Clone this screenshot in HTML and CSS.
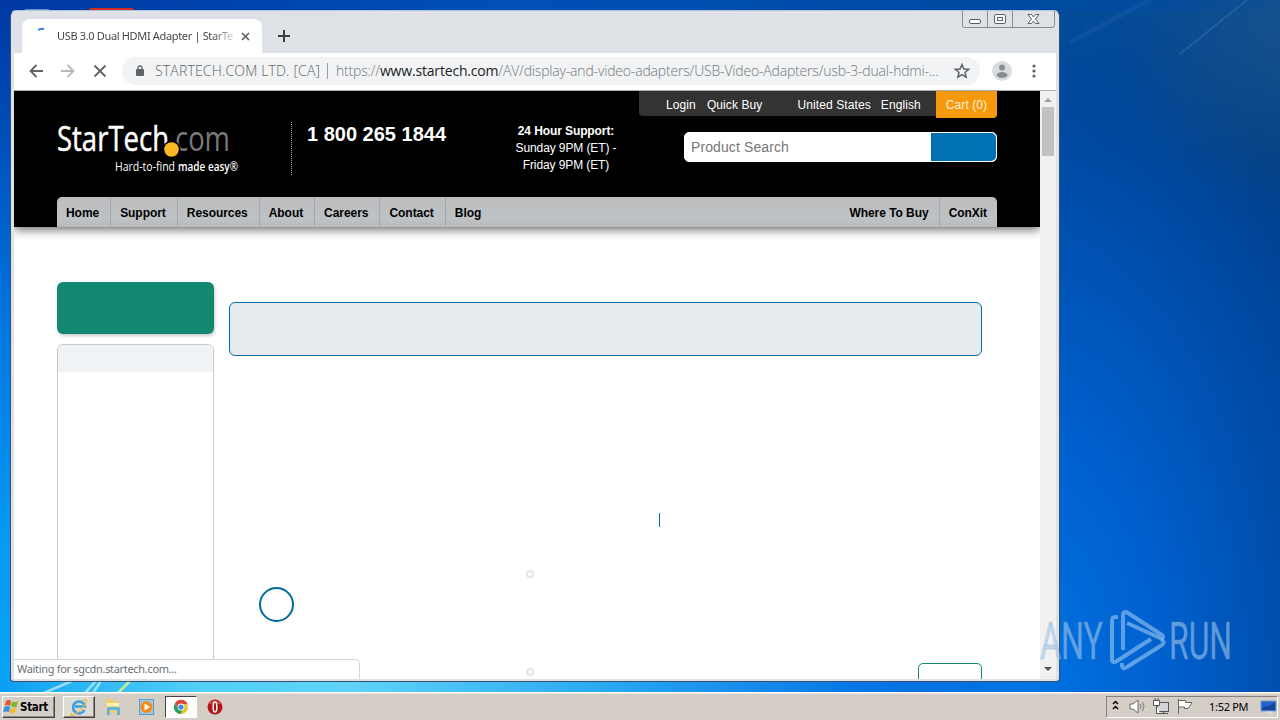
FILE: index.html
```html
<!DOCTYPE html>
<html lang="en">
<head>
    <meta charset="UTF-8">
    <title>USB 3.0 Dual HDMI Adapter | StarTech.com</title>
    <link rel="stylesheet" href="styles.css">
</head>
<body>
<div class="desktop">
    <!-- wallpaper light streaks and icons behind the window -->
    <svg class="streaks" width="1280" height="692">
        <path d="M1180 54L1247 0" stroke="#4f86c0" stroke-width="1.5" opacity=".4"/>
        <path d="M1070 42L1150 0" stroke="#3e7cc4" stroke-width="5" opacity=".15"/>
        <path d="M44 693L72 681M85 693L96 681M93 693L101 681" stroke="#d8f6ff" stroke-width="2.5" opacity=".65"/>
        <path d="M118 693L130 681" stroke="#c9ef90" stroke-width="2.5"/>
        <rect x="89" y="8" width="45" height="6" rx="2" fill="#d22b20"/>
        <rect x="25" y="9" width="24" height="3" fill="#6c91c9"/>
    </svg>

    <div class="window">
        <div class="titlebar">
            <div class="tab">
                <svg class="spinner" width="14" height="14"><path d="M3 3Q6 1 9 2" stroke="#3b78e7" stroke-width="2" fill="none"/></svg>
                <span class="tab-title">USB 3.0 Dual HDMI Adapter | StarTe</span>
                <svg class="tab-close" width="9" height="9"><path d="M1 1L8 8M8 1L1 8" stroke="#5f6368" stroke-width="1.7"/></svg>
            </div>
            <svg class="new-tab" width="12" height="12"><path d="M6 0V12M0 6H12" stroke="#3c4043" stroke-width="2"/></svg>
            <div class="controls">
                <svg width="94" height="17" fill="none" stroke="#5b5e68">
                    <path d="M.5 0V14.5Q.5 16.5 2.5 16.5H90Q92.500 16.500 92.500 14V0M25.500 0V16M50.500 0V16" stroke="#888b94"/>
                    <rect x="7.500" y="8.500" width="11" height="4" rx="1.500" fill="#fff"/>
                    <rect x="32.500" y="3.500" width="11" height="9" rx="1.500" fill="#fff"/>
                    <rect x="35.500" y="6.500" width="5" height="3"/>
                    <path d="M66 3.500H69.500L71.500 6L73.500 3.500H77L73.500 8L77 12.500H73.500L71.500 10L69.500 12.500H66L69.500 8Z" fill="#fff"/>
                </svg>
            </div>
        </div>

        <div class="toolbar">
            <svg width="14" height="14" class="back"><path d="M14 7H1.500M7.500 1L1.500 7L7.500 13" class="ico"/></svg>
            <svg width="14" height="14" class="forward"><path d="M0 7H12.500M6.500 1L12.500 7L6.500 13" class="ico"/></svg>
            <svg width="14" height="14" class="stop"><path d="M1.500 1.500L12.500 12.500M12.500 1.500L1.500 12.500" class="ico"/></svg>
            <div class="omnibox">
                <svg width="10" height="12" class="lock"><rect x="1" y="4" width="8" height="7" rx="1" fill="#5f6368"/><path d="M3 5V3Q3 1 5 1T7 3V5" stroke="#5f6368" stroke-width="1.300" fill="none"/></svg>
                <span class="issuer">STARTECH.COM LTD. [CA]</span>
                <span class="url">https://<b>www.startech.com</b>/AV/display-and-video-adapters/USB-Video-Adapters/usb-3-dual-hdmi-...</span>
                <svg width="16" height="16" class="star"><path d="M8 1.500L9.900 6L14.700 6.400L11 9.500L12.200 14.200L8 11.700L3.800 14.200L5 9.500L1.300 6.400L6.100 6Z" fill="none" stroke="#5f6368" stroke-width="1.500"/></svg>
            </div>
            <svg width="20" height="20" class="avatar"><circle cx="10" cy="10" r="10" fill="#dadce0"/><circle cx="10" cy="6.500" r="3" fill="#8a8d91"/><ellipse cx="10" cy="14" rx="5.500" ry="3" fill="#8a8d91"/></svg>
            <svg width="4" height="14" class="menu" fill="#5f6368"><circle cx="2" cy="2" r="1.600"/><circle cx="2" cy="7" r="1.600"/><circle cx="2" cy="12" r="1.600"/></svg>
        </div>

        <div class="viewport">
            <div class="page">
                <header>
                    <div class="topbar">
                        <div class="links">
                            <span>Login</span><span>Quick Buy</span>
                            <span class="country">United States</span><span>English</span>
                        </div>
                        <div class="cart">Cart (0)</div>
                    </div>
                    <div class="masthead">
                        <svg class="logo" width="184" height="54">
                            <text x="0" y="28" font-size="35" fill="#fff" stroke="#fff" stroke-width=".5" textLength="112" lengthAdjust="spacingAndGlyphs">StarTech</text>
                            <text x="118" y="28" font-size="35" fill="#77787b" textLength="55" lengthAdjust="spacingAndGlyphs">com</text>
                            <circle cx="114.500" cy="26.500" r="9" fill="#000"/>
                            <circle cx="114.500" cy="26.500" r="7.300" fill="#fdb924"/>
                            <text x="58" y="48" font-size="12" fill="#fff" textLength="60" lengthAdjust="spacingAndGlyphs" class="tagline">Hard-to-find</text>
                            <text x="121" y="48" font-size="12" fill="#fff" textLength="60" lengthAdjust="spacingAndGlyphs" class="tagline strong">made easy®</text>
                        </svg>
                        <div class="phone">1 800 265 1844</div>
                        <div class="hours"><b>24 Hour Support:</b><br>Sunday 9PM (ET) -<br>Friday 9PM (ET)</div>
                        <div class="search"><span>Product Search</span><i></i></div>
                    </div>
                    <nav>
                        <a>Home</a><a>Support</a><a>Resources</a><a>About</a><a>Careers</a><a>Contact</a><a class="last">Blog</a>
                        <a class="buy">Where To Buy</a><a class="last">ConXit</a>
                    </nav>
                </header>
                <main>
                    <aside>
                        <div class="promo"></div>
                        <div class="panel"><div class="panel-head"></div></div>
                    </aside>
                    <section>
                        <div class="notice"></div>
                        <div class="divider"></div>
                        <div class="product">
                            <div class="round"></div>
                            <div class="dots"><i></i><i></i></div>
                            <div class="green-box"></div>
                        </div>
                    </section>
                </main>
            </div>
            <div class="scrollbar">
                <svg width="16" height="16"><path d="M4 11L8 7L12 11Z" fill="#a0a0a0"/></svg>
                <div class="thumb"></div>
                <svg width="16" height="17"><path d="M4 5H12L8 9Z" fill="#505050"/></svg>
            </div>
            <div class="status">Waiting for sgcdn.startech.com...</div>
        </div>
    </div>

    <svg class="watermark" width="194" height="64" fill="none">
        <g class="mark-text">
            <text x="1" y="50" textLength="63" lengthAdjust="spacingAndGlyphs">ANY</text>
            <text x="130" y="50" textLength="63" lengthAdjust="spacingAndGlyphs">RUN</text>
        </g>
        <g stroke="#9cc8f2" stroke-width="4" stroke-opacity=".6" stroke-linejoin="round">
            <path d="M79 8H76Q73 8 73 12V50Q73 55 78 52L112 30"/>
            <path d="M84 41V7Q84 1 89 4L123 26Q126 29 121 29L88 14"/>
            <path d="M83 54V57Q84 61 88 58L123 36Q127 33 122 30"/>
        </g>
    </svg>
</div>

<div class="taskbar">
    <div class="start">
        <svg width="17" height="16"><path d="M3 2Q6 0 8 2L7 7Q4 5 2 7Z" fill="#e5532d"/><path d="M9 2.500Q12 4 15 2L13.500 8Q11 9 8 7Z" fill="#78b928"/><path d="M1.500 8Q4 6 7 8L6 13Q3 12 0 13Z" fill="#3b8fe0"/><path d="M8 8.500Q10 10 13 9L12 14Q9 15 6.500 13Z" fill="#f4bd28"/></svg>
        <span>Start</span>
    </div>
    <div class="task raised">
        <svg width="18" height="18" fill="none"><path d="M14.500 12A6 6 0 1 1 15 8.500H5" stroke="#3c9ee0" stroke-width="2.500"/><path d="M2 15Q-1 18 3 17Q11 14 16 5Q18 0 12 3" stroke="#e5bf44" stroke-width="1.300"/></svg>
    </div>
    <div class="task">
        <svg width="18" height="18"><path d="M2 3L3 1H8L9 3H15V15H2Z" fill="#efd173"/><path d="M3 5H15V8H3Z" fill="#fff2bb"/><path d="M3 17V10Q3 9 5 9H14Q16 9 16 11V17H13V12H6V17Z" fill="#63b3df"/></svg>
    </div>
    <div class="task">
        <svg width="18" height="18"><rect x="1.500" y="1.500" width="14" height="15" fill="#9ec9ef" stroke="#5b9bd0"/><circle cx="8.500" cy="9" r="6" fill="#f58c14"/><path d="M6.500 5.500L12 9L6.500 12.500Z" fill="#fff"/></svg>
    </div>
    <div class="task active">
        <svg width="16" height="16"><circle cx="8" cy="8" r="7" fill="#e4c62f"/><path d="M2 4.300A7 7 0 0 1 14.500 5H8L5 9Z" fill="#dc4437"/><path d="M1.900 4.500A7 7 0 0 0 7.500 15L10 10L5 9Z" fill="#24a05a"/><circle cx="8" cy="8" r="3.400" fill="#fff"/><circle cx="8" cy="8" r="2.600" fill="#4285e8"/></svg>
    </div>
    <div class="task">
        <svg width="18" height="18"><circle cx="9" cy="9" r="7.500" fill="#b91518"/><path d="M3 6A7 7 0 0 1 15 6Z" fill="#dc4a42"/><ellipse cx="9" cy="9" rx="1.800" ry="5" fill="#a31012" stroke="#fff" stroke-width="1.500"/></svg>
    </div>
    <div class="tray">
        <svg width="90" height="20" fill="none">
            <path d="M6 7L8.500 4.500L11 7M6 12L8.500 9.500L11 12" stroke="#000" stroke-width="1.500"/>
            <path d="M23 7H26L31 3V16L26 12H23Z" fill="#fff" stroke="#6b6b6b"/>
            <path d="M33 7Q35 9.500 33 12M35.500 5Q38.500 9.500 35.500 14" stroke="#777"/>
            <rect x="50.500" y="5.500" width="11" height="9" fill="#d5d5d5" stroke="#555"/>
            <path d="M52 16.500H61M56.500 14V17" stroke="#555"/>
            <path d="M46.500 3.500H52.500V8.500H46.500ZM49.500 8V16.500H53M48 1V4M51 1V4" fill="#fff" stroke="#555"/>
            <path d="M71.500 2V17M72 3.500H78.500V5.500H85L83 8.500L81 11.500H77.500V10H72" fill="#fff" stroke="#666"/>
        </svg>
        <span class="clock">1:52 PM</span>
        <svg width="17" height="14"><rect x="1" y="1" width="15" height="10" fill="#2065cb" stroke="#789bc4"/><path d="M2 7Q8 8 15 2V10H2Z" fill="#15449d"/><path d="M6 12.500H12" stroke="#d8dde2" stroke-width="2"/></svg>
    </div>
</div>
</body>
</html>
```

FILE: styles.css
```css
* {
    box-sizing: border-box;
}

body {
    margin: 0;
    width: 1280px;
    height: 720px;
    overflow: hidden;
    font-family: "Liberation Sans", Arial, sans-serif;
    font-size: 12px;
}

svg {
    display: block;
    flex: none;
    overflow: visible;
}

.desktop {
    position: relative;
    height: 692px;
    background:
        linear-gradient(90deg, #0a9cf2 0, #26b4f4 70px, #52d0f7 200px, #5fd3f8 350px, #2ba9f2 600px, #0878e6 850px, rgba(0, 104, 220, 0) 1060px) 0 681px / 1280px 11px no-repeat,
        linear-gradient(180deg, #0038a3 0, #004bb7 120px, #0076df 320px, #069bf4 550px, #09a3f5 692px) 0 0 / 12px 692px no-repeat,
        linear-gradient(90deg, #0038a3, #0050b8 500px, #004a9f 1060px, rgba(4, 76, 153, 0)) 0 0 / 1280px 11px no-repeat,
        radial-gradient(ellipse 160px 170px at 1280px 40px, rgba(35, 85, 130, .55), transparent),
        radial-gradient(ellipse 380px 720px at 1020px 700px, #0075e5 0, #005fcc 40%, #004daa 72%, rgba(0, 69, 148, 0) 100%),
        linear-gradient(180deg, #044c99 0, #003f87 150px, #00408f 280px, #0048a5 692px);
}

.streaks {
    position: absolute;
    left: 0;
    top: 0;
    overflow: hidden;
}

.window {
    position: absolute;
    left: 10px;
    top: 10px;
    width: 1050px;
    height: 672px;
    padding: 0 3px 3px;
    background: #dee1e6;
    border: 1px solid #39506f;
    border-top-color: #adc3dd;
    border-radius: 6px 6px 4px 4px;
}

.titlebar {
    display: flex;
    height: 42px;
    padding-left: 8px;
}

.tab {
    display: flex;
    align-items: center;
    width: 240px;
    height: 34px;
    margin-top: 8px;
    padding: 0 12px 0 13px;
    background: #fff;
    border-radius: 8px 8px 0 0;
}

.spinner {
    margin: -4px 8px 0 0;
}

.tab-title {
    width: 177px;
    margin-top: -2px;
    font: 11px "Noto Sans", sans-serif;
    letter-spacing: -.34px;
    white-space: nowrap;
    background: linear-gradient(90deg, #3c4043 155px, #d4d5d6 176px);
    background-clip: text;
    -webkit-background-clip: text;
    color: transparent;
}

.tab-close {
    margin-left: 7px;
}

.new-tab {
    margin: 19px 0 0 16px;
}

.controls {
    margin-left: auto;
}

.toolbar {
    display: flex;
    align-items: center;
    height: 38px;
    padding: 0 20px 1px 15px;
    background: #fff;
    border-bottom: 1px solid #aaadb0;
}

.ico {
    fill: none;
    stroke: #5f6368;
    stroke-width: 1.8;
}

.forward {
    margin-left: 18px;
    opacity: .45;
}

.stop {
    margin-left: 18px;
}

.omnibox {
    display: flex;
    align-items: center;
    width: 858px;
    height: 28px;
    margin-left: 15px;
    padding: 0 10px 0 13px;
    background: #f1f3f4;
    border-radius: 14px;
    font: 300 14px "Open Sans", sans-serif;
    color: #5f6368;
    white-space: nowrap;
}

.issuer {
    flex: none;
    width: 173px;
    margin-left: 10px;
    border-right: 1px solid #9aa0a6;
    line-height: 16px;
    letter-spacing: .17px;
}

.url {
    margin: -1px 0 0 8px;
    letter-spacing: -.18px;
    color: #72777c;
}

.url b {
    font-weight: 400;
    color: #202124;
}

.star {
    margin-left: auto;
}

.avatar {
    margin-left: 12px;
}

.menu {
    margin-left: auto;
}

.viewport {
    position: relative;
    display: flex;
    height: 588px;
    background: #fff;
    overflow: hidden;
}

.page {
    width: 1026px;
    overflow: hidden;
}

header {
    height: 136px;
    padding: 0 43px;
    background: #000;
    color: #fff;
    box-shadow: 0 2px 10px rgba(0, 0, 0, .65);
}

.topbar {
    display: flex;
    justify-content: flex-end;
    height: 31px;
    letter-spacing: .1px;
}

.links {
    display: flex;
    width: 297px;
    height: 25px;
    padding-left: 27px;
    gap: 11px;
    background: #333;
    border-radius: 0 0 0 4px;
    line-height: 28px;
}

.country {
    margin-left: 24px;
}

.links span:last-child {
    margin-left: -1px;
}

.cart {
    width: 61px;
    height: 27px;
    background: #f7990c;
    border-radius: 0 0 4px 0;
    line-height: 28px;
    text-align: center;
    color: #fff3dc;
}

.masthead {
    display: flex;
    height: 75px;
}

.logo {
    margin-top: 1px;
    font-family: "Open Sans", sans-serif;
}

.tagline {
    font-weight: 400;
}

.strong {
    font-weight: 600;
}

.phone {
    width: 159px;
    height: 53px;
    margin-left: 50px;
    padding-left: 15px;
    border-left: 1px dotted #aaa;
    font-size: 20px;
    font-weight: bold;
    line-height: 24px;
    white-space: nowrap;
}

.hours {
    width: 110px;
    margin: 1px 0 0 61px;
    line-height: 17px;
    letter-spacing: -.1px;
    text-align: center;
}

.search {
    display: flex;
    width: 313px;
    height: 30px;
    margin: 10px 0 0 63px;
    background: #fff;
    border: 1px solid #fff;
    border-radius: 5px;
    color: #777;
    font-size: 14px;
    line-height: 28px;
}

.search span {
    width: 246px;
    padding-left: 6px;
    letter-spacing: .1px;
}

.search i {
    flex: 1;
    background: #0071b2;
    border-radius: 0 5px 5px 0;
}

nav {
    display: flex;
    align-items: center;
    height: 30px;
    background: linear-gradient(#bcbdbf, #bec2c4 75%, #b8b9bb);
    border-radius: 5px 5px 0 0;
    color: #000;
    font-weight: bold;
    letter-spacing: -.05px;
}

nav a {
    height: 30px;
    padding: 1px 11px 0 9px;
    border-right: 1px solid #a5a9ac;
    line-height: 30px;
}

nav a.last {
    border-right: 0;
}

nav .buy {
    margin-left: auto;
    padding-right: 10px;
}

nav .buy + .last {
    padding-right: 10px;
}

main {
    display: flex;
    gap: 15px;
    padding: 55px 43px 0;
}

aside {
    width: 157px;
}

.promo {
    height: 52px;
    background: #138770;
    border-radius: 6px;
    box-shadow: 1px 2px 3px rgba(0, 0, 0, .2);
}

.panel {
    height: 400px;
    margin-top: 10px;
    border: 1px solid #c6c9ca;
    border-radius: 6px;
    overflow: hidden;
}

.panel-head {
    height: 27px;
    background: #f0f3f5;
}

section {
    width: 753px;
    padding-top: 20px;
}

.notice {
    height: 54px;
    background: #e6ebee;
    border: 1px solid #0071a9;
    border-radius: 6px;
}

.divider {
    width: 1px;
    height: 14px;
    margin: 157px 0 0 430px;
    background: #006a9c;
}

.product {
    display: flex;
    height: 160px;
    margin-top: 43px;
}

.round {
    width: 35px;
    height: 35px;
    margin: 17px 0 0 30px;
    border: 2px solid #006a9c;
    border-radius: 50%;
}

.dots {
    display: flex;
    flex-direction: column;
    gap: 90px;
    margin-left: 232px;
}

.dots i {
    width: 8px;
    height: 8px;
    border: 2px solid #e6e6e6;
    border-radius: 50%;
}

.green-box {
    width: 64px;
    height: 40px;
    margin: 93px 0 0 auto;
    border: 1px solid #138770;
    border-radius: 5px;
}

.scrollbar {
    display: flex;
    flex-direction: column;
    width: 16px;
    background: #f1f1f1;
}

.thumb {
    width: 12px;
    height: 49px;
    margin: 0 2px auto;
    background: #c1c1c1;
}

.status {
    position: absolute;
    left: -1px;
    bottom: -1px;
    width: 347px;
    height: 21px;
    padding-left: 3px;
    background: #fff;
    border: 1px solid #d4d6d8;
    border-radius: 0 4px 0 0;
    font: 11px/18px "Noto Sans", sans-serif;
    letter-spacing: -.32px;
    color: #6b6e72;
}

.watermark {
    position: absolute;
    left: 1039px;
    top: 609px;
}

.mark-text {
    font: 400 52px Roboto, sans-serif;
    fill: #9cc8f2;
    fill-opacity: .6;
    stroke: #8a9aad;
    stroke-opacity: .3;
    stroke-width: 1;
}

.taskbar {
    display: flex;
    align-items: center;
    height: 28px;
    padding: 0 2px;
    background: #d4cec7;
    border-top: 1px solid #fff;
    box-shadow: inset 0 1px #e8e3dd;
}

.start {
    display: flex;
    align-items: center;
    width: 53px;
    height: 22px;
    border: 1px solid;
    border-color: #fff #444 #444 #fff;
    box-shadow: inset -1px -1px #8a8680;
    font: bold 11.5px "DejaVu Sans Condensed", "Noto Sans", sans-serif;
    letter-spacing: -.3px;
}

.task {
    display: flex;
    align-items: center;
    justify-content: center;
    width: 32px;
    height: 22px;
    margin-right: 2px;
}

.start + .task {
    margin-left: 8px;
}

.raised {
    border: 1px solid;
    border-color: #fff #444 #444 #fff;
    box-shadow: inset -1px -1px #8a8680;
    background: #dedbd4;
}

.active {
    border: 1px solid;
    border-color: #444 #fff #fff #444;
    background: #fff;
}

.tray {
    display: flex;
    align-items: center;
    width: 172px;
    height: 22px;
    margin-left: auto;
    border: 1px solid;
    border-color: #85817b #fff #fff #85817b;
}

.clock {
    width: 48px;
    margin: 0 4px 0 12px;
    font: 11px "Noto Sans", sans-serif;
    letter-spacing: -.3px;
    white-space: nowrap;
}
```
